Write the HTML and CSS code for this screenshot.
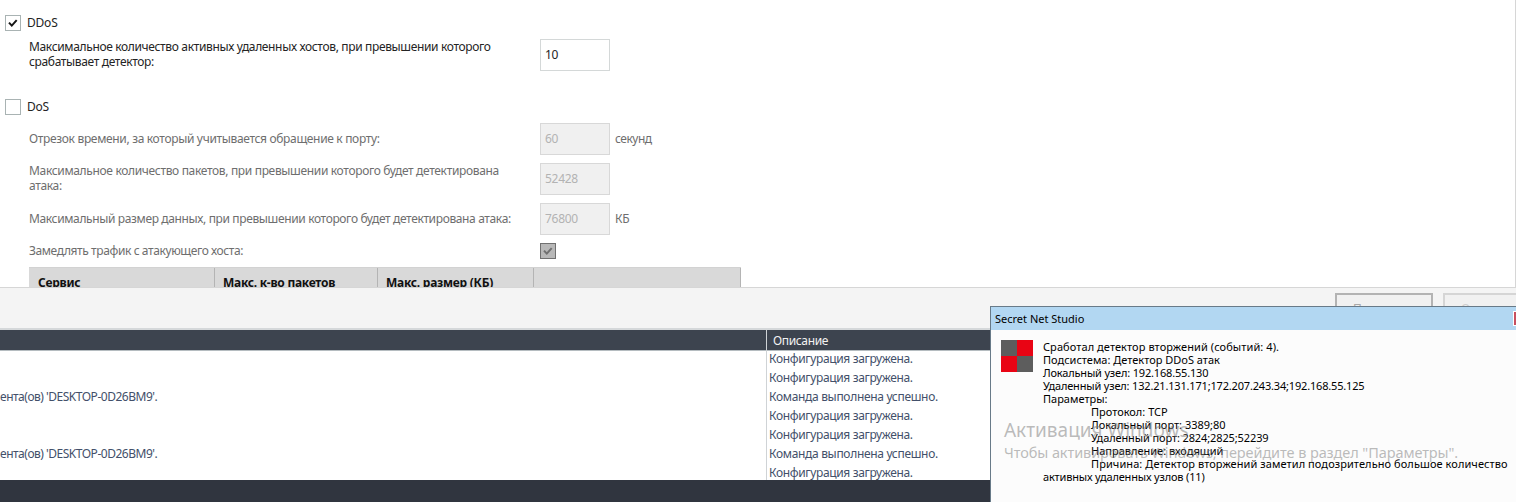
FILE: index.html
```html
<!DOCTYPE html>
<html lang="ru">
<head>
<meta charset="utf-8">
<title>Secret Net Studio</title>
<link rel="stylesheet" href="styles.css">
</head>
<body>
<main class="app">
  <section class="settings">
    <div class="group group-ddos">
      <span class="check"><svg width="14" height="14" viewBox="0 0 14 14"><path class="tick" d="M3 6.6 L5.8 9.6 L10.7 4.2"/></svg></span>
      <span class="name">DDoS</span>
    </div>
    <div class="row row-hosts">
      <div class="label">Максимальное количество активных удаленных хостов, при превышении которого<br>срабатывает детектор:</div>
      <div class="field">10</div>
    </div>
    <div class="group group-dos">
      <span class="check"></span>
      <span class="name">DoS</span>
    </div>
    <div class="disabled">
      <div class="row row-time">
        <div class="label label-time">Отрезок времени, за который учитывается обращение к порту:</div>
        <div class="field">60</div>
        <span class="unit">секунд</span>
      </div>
      <div class="row row-packets">
        <div class="label">Максимальное количество пакетов, при превышении которого будет детектирована<br>атака:</div>
        <div class="field">52428</div>
      </div>
      <div class="row row-size">
        <div class="label label-size">Максимальный размер данных, при превышении которого будет детектирована атака:</div>
        <div class="field">76800</div>
        <span class="unit unit-kb">КБ</span>
      </div>
      <div class="row row-slow">
        <div class="label label-slow">Замедлять трафик с атакующего хоста:</div>
        <span class="check check-off"><svg width="14" height="14" viewBox="0 0 14 14"><path class="tick" d="M3 6.6 L5.8 9.6 L10.7 4.2"/></svg></span>
      </div>
    </div>
    <div class="services">
      <div class="th">Сервис</div>
      <div class="th">Макс. к-во пакетов</div>
      <div class="th">Макс. размер (КБ)</div>
      <div class="th"></div>
    </div>
  </section>
  <div class="actions">
    <div class="btn">Применить</div>
    <div class="btn btn-dim">Отменить</div>
  </div>
  <section class="log">
    <div class="log-head"><div class="c1"></div><div class="c2">Описание</div></div>
    <div class="log-body">
      <div class="log-row"><div class="c1"></div><div class="c2">Конфигурация загружена.</div></div>
      <div class="log-row"><div class="c1"></div><div class="c2">Конфигурация загружена.</div></div>
      <div class="log-row"><div class="c1">ента(ов) 'DESKTOP-0D26BM9'.</div><div class="c2 done">Команда выполнена успешно.</div></div>
      <div class="log-row"><div class="c1"></div><div class="c2">Конфигурация загружена.</div></div>
      <div class="log-row"><div class="c1"></div><div class="c2">Конфигурация загружена.</div></div>
      <div class="log-row"><div class="c1">ента(ов) 'DESKTOP-0D26BM9'.</div><div class="c2 done">Команда выполнена успешно.</div></div>
      <div class="log-row"><div class="c1"></div><div class="c2">Конфигурация загружена.</div></div>
    </div>
  </section>
  <div class="status"></div>
  <aside class="toast">
    <header class="toast-title"><span>Secret Net Studio</span><i class="close"></i></header>
    <div class="toast-body">
      <svg class="logo" width="32" height="32" viewBox="0 0 32 32"><path fill="#5d5d5d" d="M0 0h16v16H0zM16 16h16v16H16z"/><path fill="#e90414" d="M16 0h16v16H16zM0 16h16v16H0z"/></svg>
      <div class="lines">
        <p class="wide">Сработал детектор вторжений (событий: 4).</p>
        <p>Подсистема: Детектор DDoS атак</p>
        <p class="tight">Локальный узел: 192.168.55.130</p>
        <p class="tight">Удаленный узел: 132.21.131.171;172.207.243.34;192.168.55.125</p>
        <p>Параметры:</p>
        <p class="in">Протокол: TCP</p>
        <p class="in">Локальный порт: 3389;80</p>
        <p class="in ports">Удаленный порт: 2824;2825;52239</p>
        <p class="in">Направление: входящий</p>
        <p class="in wide">Причина: Детектор вторжений заметил подозрительно большое количество</p>
        <p class="tight">активных удаленных узлов (11)</p>
      </div>
    </div>
  </aside>
  <div class="watermark"><div class="w1">Активация Windows</div><div class="w2">Чтобы активировать Windows, перейдите в раздел "Параметры".</div></div>
</main>
</body>
</html>
```
FILE: styles.css
```css
* { box-sizing: border-box; }
body { margin: 0; overflow: hidden; font: 12px/15px "Noto Sans", "Open Sans", sans-serif; color: #242424; }
.app { position: relative; display: flex; flex-direction: column; width: 1516px; height: 502px; overflow: hidden; background: #f4f4f4; white-space: nowrap; }
.settings { flex: none; height: 288px; padding: 15px 0 0 5px; overflow: hidden; background: #fff; border-bottom: 1px solid #d6d6d6; border-right: 1px solid #d6d6d6; }
.group { display: flex; align-items: center; gap: 6px; height: 16px; }
.group-dos { margin-top: 28px; }
.name { padding-bottom: 2px; letter-spacing: -.2px; }
.check { display: block; flex: none; width: 16px; height: 16px; border: 1px solid #a9b3b3; background: #fff; }
.check svg { display: block; }
.tick { fill: none; stroke: #161616; stroke-width: 2; }
.check-off { border-color: #707070; background: #b8b8b8; }
.check-off .tick { stroke: #707070; }
.row { display: flex; margin-left: 24px; }
.row-hosts { margin-top: 8px; height: 32px; }
.label { width: 511px; letter-spacing: -.35px; }
.row-packets .label { letter-spacing: -.335px; }
.label-time { letter-spacing: -.33px; }
.label-size { letter-spacing: -.365px; }
.label-slow { letter-spacing: -.4px; }
.field { width: 70px; height: 32px; padding: 7px 0 0 4px; border: 1px solid #d4d8d8; background: #fff; letter-spacing: -.3px; }
.unit { margin-left: 5px; padding-top: 8px; letter-spacing: -.5px; }
.unit-kb { letter-spacing: -.2px; }
.disabled { color: #6e6e6e; }
.disabled .field { color: #b3b3b3; background: #f0f0f0; border-color: #d8d8d8; }
.row-time { margin-top: 8px; }
.row-time .label { padding-top: 8px; }
.row-packets, .row-size { margin-top: 8px; }
.row-size .label { padding-top: 8px; }
.row-slow { margin-top: 8px; height: 16px; }
.services { display: grid; grid-template-columns: 186px 163px 156px 207px; margin: 8px 0 0 24px; width: 712px; height: 40px; background: #d9d9d9; border-top: 1px solid #d2d2d2; }
.th { padding: 7px 0 0 9px; border-right: 1px solid #b4b4b4; font-weight: 700; letter-spacing: -.26px; color: #111; }
.th + .th { padding-left: 8px; }
.actions { display: flex; gap: 10px; flex: none; height: 42px; padding: 5px 0 0 1335px; border-bottom: 2px solid #d5d8da; overflow: hidden; }
.btn { flex: none; width: 98px; height: 32px; padding: 6px 0 0 16px; border: 2px solid #b3b3b3; background: #f1f1f1; color: #a9a9a9; }
.btn-dim { border-color: #d5d5d5; color: #cecece; }
.log { flex: none; height: 150px; overflow: hidden; background: #fff; color: #43506a; letter-spacing: -.35px; }
.log-head, .log-row { display: grid; grid-template-columns: 766px 1fr; }
.log-head { height: 20px; background: #3d444f; color: #f2f2f2; line-height: 22px; }
.log-body { border-top: 1px solid #b5bcc0; }
.log-row { height: 19px; line-height: 15px; }
.c1 { letter-spacing: -.48px; }
.c2 { border-left: 1px solid #cfd3d6; padding-left: 2px; }
.done { letter-spacing: -.32px; }
.log-head .c2 { padding-left: 6px; }
.status { flex: 1; background: #30353f; }
.toast { position: absolute; left: 990px; top: 306px; width: 560px; height: 220px; background: #fcfcfc; border: 1px solid #687a88; color: #000; }
.toast-title { position: relative; height: 23px; padding-left: 4px; background: #b2d7f2; line-height: 24px; font-size: 11px; }
.close { position: absolute; left: 522px; top: 4px; width: 30px; height: 15px; background: #c7505f; border: 1px solid #fff; }
.toast-body { display: flex; align-items: flex-start; gap: 10px; padding: 10px 0 0 10px; font-size: 11px; line-height: 13px; }
.logo { display: block; flex: none; }
.lines p { margin: 0; height: 13px; }
.lines .in { padding-left: 48px; }
.wide { letter-spacing: .08px; }
.tight { letter-spacing: -.175px; }
.ports { letter-spacing: -.11px; }
.watermark { position: absolute; left: 1004px; top: 418px; color: rgba(120, 120, 120, .5); }
.w1 { font-size: 19px; line-height: 24px; }
.w2 { font-size: 14.5px; line-height: 20px; letter-spacing: -.085px; }
```
